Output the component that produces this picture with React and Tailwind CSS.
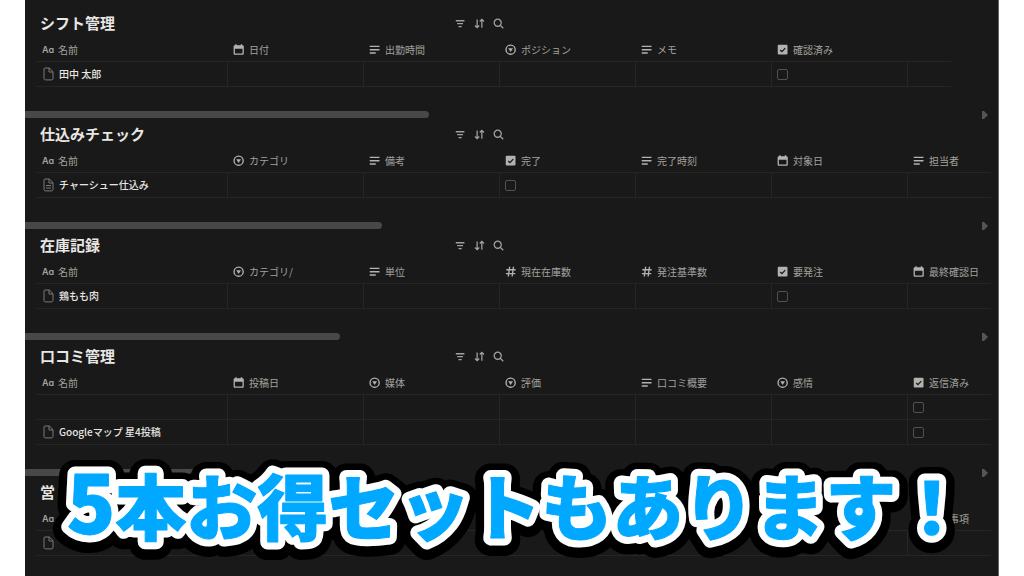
// Ícones das propriedades
function PropIcon({ type }) {
  if (type === 'title') {
    return <span className="w-3 shrink-0 font-['Inter',sans-serif] text-[9px] font-semibold [font-feature-settings:'cv11']">Aa</span>;
  }
  return (
    <svg viewBox="0 0 16 16" className="size-3 shrink-0 text-[#b4b2ad]" fill="none" stroke="currentColor" strokeWidth="1.8" aria-hidden="true">
      {type === 'text' && <path d="M1 3.2h13M1 7.600h13M1 12h8" />}
      {type === 'date' && (
        <path fill="currentColor" stroke="none" fillRule="evenodd" d="M3 .3h1.900v1.400h5.400V.3h1.900v1.400h.4c1 0 1.800.8 1.800 1.800v9c0 1-.8 1.800-1.800 1.800H2.600c-1 0-1.800-.8-1.800-1.800v-9c0-1 .8-1.800 1.800-1.800H3zM2.500 6.300V12c0 .3.2.5.5.5h9.200c.3 0 .5-.2.5-.5V6.300z" />
      )}
      {type === 'select' && (
        <>
          <circle cx="7.500" cy="7.500" r="6.100" />
          <path fill="currentColor" stroke="none" d="M4.300 5.600h6.400L7.500 10.700z" />
        </>
      )}
      {type === 'check' && (
        <>
          <rect x="1" y="1" width="13" height="13" rx="1.200" fill="currentColor" stroke="none" />
          <path d="M4.300 7.900l2.300 2.300 4.400-4.700" stroke="#191919" />
        </>
      )}
      {type === 'number' && <path d="M6.200 1l-1.800 13M11.300 1L9.500 14M1.700 5h12.500M1.200 10.200h12.500" />}
    </svg>
  );
}

function PageIcon({ filled }) {
  return (
    <svg viewBox="0 0 12 14" className="h-3.5 w-3 shrink-0 text-[#7d7b77]" fill="none" stroke="currentColor" strokeWidth="1" aria-hidden="true">
      <path d="M3 1h4.300L11 4.700v6.800c0 .8-.6 1.400-1.400 1.400H3.400C2.600 12.900 2 12.300 2 11.500V2c0-.6.4-1 1-1zM7 1v4h4" />
      {filled && <path d="M4 7.500h5M4 10h5" />}
    </svg>
  );
}

const tools = [
  { label: 'フィルター', d: 'M1 3.500h11M2.800 7.200h7.400M4.500 11h4' },
  { label: '並べ替え', d: 'M4 2v10M1.300 9.500L4 12.200l2.700-2.700M10 12.500V2M7.300 4.500L10 1.800l2.700 2.700' },
  { label: '検索', d: 'M10.500 6a4.500 4.500 0 1 1-9 0a4.500 4.500 0 1 1 9 0M9.300 9.300l3.700 3.700' },
];

const databases = [
  {
    title: 'シフト管理',
    pad: 'pr-12',
    bar: 'w-[404px]',
    columns: [['title', '名前'], ['date', '日付'], ['text', '出勤時間'], ['select', 'ポジション'], ['text', 'メモ'], ['check', '確認済み'], null],
    rows: [{ icon: 'page', name: '田中 太郎' }],
  },
  {
    title: '仕込みチェック',
    pad: 'pr-2',
    bar: 'w-[357px]',
    columns: [['title', '名前'], ['select', 'カテゴリ'], ['text', '備考'], ['check', '完了'], ['text', '完了時刻'], ['date', '対象日'], ['text', '担当者']],
    rows: [{ icon: 'filled', name: 'チャーシュー仕込み' }],
  },
  {
    title: '在庫記録',
    pad: 'pr-2',
    bar: 'w-[315px]',
    columns: [['title', '名前'], ['select', 'カテゴリ/'], ['text', '単位'], ['number', '現在在庫数'], ['number', '発注基準数'], ['check', '要発注'], ['date', '最終確認日']],
    rows: [{ icon: 'page', name: '鶏もも肉' }],
  },
  {
    title: '口コミ管理',
    pad: 'pr-2',
    bar: 'w-[175px]',
    columns: [['title', '名前'], ['date', '投稿日'], ['select', '媒体'], ['select', '評価'], ['text', '口コミ概要'], ['select', '感情'], ['check', '返信済み']],
    rows: [{}, { icon: 'page', name: 'Googleマップ 星4投稿' }],
  },
  {
    title: '営',
    pad: 'pr-2',
    columns: [['title', ''], null, null, null, null, null, ['text', '特記事項']],
    rows: [{ icon: 'page' }],
  },
];

function Database({ db }) {
  const [, ...fields] = db.columns;

  return (
    <section>
      <div className="flex h-[31px] items-center pl-[15px]">
        <h2 className="w-[415px] text-[15px] leading-5 font-bold text-[#e8e6e3]">{db.title}</h2>
        {db.bar && (
          <div className="flex gap-2 pt-px">
            {tools.map((tool) => (
              <button key={tool.label} type="button" aria-label={tool.label} className="text-[#a3a29e]">
                <svg viewBox="0 0 14 14" className="size-[11px]" fill="none" stroke="currentColor" strokeWidth="1.600">
                  <path d={tool.d} />
                </svg>
              </button>
            ))}
          </div>
        )}
      </div>

      <div className={`pl-3 ${db.pad}`}>
        <table className="w-full table-fixed border-separate border-spacing-0 text-left text-[10px] leading-4">
          <colgroup>
            <col className="w-[191px]" />
            {fields.slice(0, 5).map((_, i) => <col key={i} className="w-[136px]" />)}
            <col />
          </colgroup>
          <thead className="text-[#a3a29e]">
            <tr>
              {db.columns.map((column, i) => (
                <th key={i} className="h-6 border-b border-[#262626] p-0 pl-[5px] font-normal">
                  {column && (
                    <span className="flex items-center gap-1 whitespace-nowrap">
                      <PropIcon type={column[0]} />
                      {column[1]}
                    </span>
                  )}
                </th>
              ))}
            </tr>
          </thead>
          <tbody>
            {db.rows.map((row, r) => (
              <tr key={r}>
                <td className="h-[25px] border-r border-b border-[#262626] p-0 pl-[5px] font-medium text-[#e8e6e3]">
                  {row.icon && (
                    <span className="flex items-center gap-[5px] whitespace-nowrap">
                      <PageIcon filled={row.icon === 'filled'} />
                      {row.name}
                    </span>
                  )}
                </td>
                {fields.map((column, i) => (
                  <td key={i} className="border-r border-b border-[#262626] p-0 pl-[5px] last:border-r-0">
                    {column && column[0] === 'check' && (
                      <input
                        type="checkbox"
                        aria-label={column[1]}
                        className="block size-[11px] appearance-none rounded-[2px] border border-[#52514f] checked:bg-[#2383e2]"
                      />
                    )}
                  </td>
                ))}
              </tr>
            ))}
          </tbody>
        </table>
      </div>

      {/* Barra de rolagem horizontal */}
      {db.bar && (
        <div className="mt-6 flex h-[7px] items-center justify-between pr-[11px]">
          <div className={`h-[7px] rounded-r-full bg-[#484848] ${db.bar}`} />
          <svg viewBox="0 0 6 8" className="h-2 w-1.5 text-[#555555]" fill="currentColor" aria-hidden="true">
            <path d="M0 0h2l4 4-4 4H0z" />
          </svg>
        </div>
      )}
    </section>
  );
}

// Título com contorno duplo: preto por fora, branco por dentro
function Headline() {
  return (
    <h1 className="absolute inset-x-0 bottom-0 h-[120px] pl-2.5">
      <svg className="block size-full" strokeLinejoin="round">
        <defs>
          <text id="headline" x="50%" y="78" textAnchor="middle" className="font-['Noto_Sans_CJK_JP',sans-serif] text-[71px] font-black">
            <tspan className="text-[80px]">5</tspan>本お得セットもあります！
          </text>
        </defs>
        <use href="#headline" y="2" fill="#000" stroke="#000" strokeWidth="32" />
        <use href="#headline" fill="#fff" stroke="#fff" strokeWidth="15" />
        <use href="#headline" fill="#fff" stroke="#fff" strokeWidth="8" />
        <use href="#headline" fill="#00a8ff" stroke="#00a8ff" strokeWidth="1" />
      </svg>
    </h1>
  );
}

export default function App() {
  return (
    <div className="relative min-h-screen overflow-hidden bg-white px-[25px] font-['Noto_Sans_CJK_JP',sans-serif]" lang="ja">
      <main className="min-h-screen bg-[#191919] pt-[7px] shadow-[inset_-1px_0_#666]">
        {databases.map((db) => (
          <Database key={db.title} db={db} />
        ))}
      </main>
      <Headline />
    </div>
  );
}
